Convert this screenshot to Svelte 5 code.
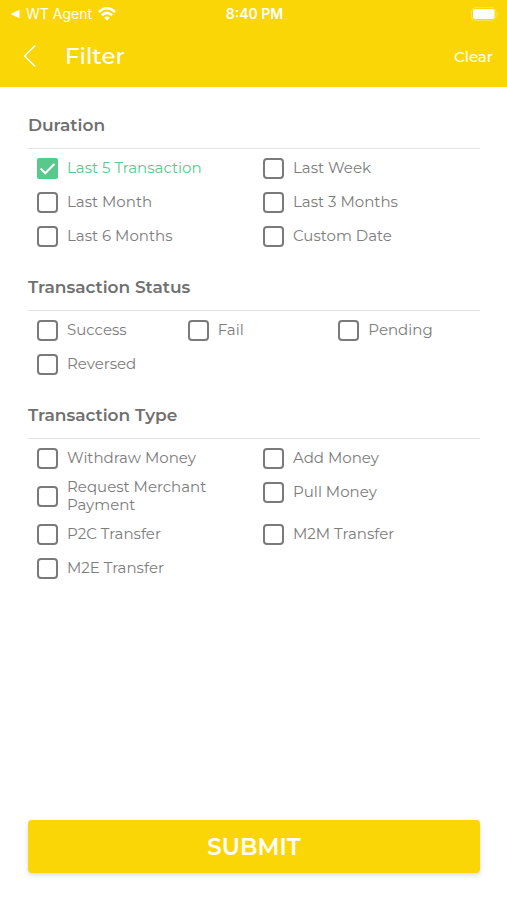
<script>
  let sections = $state([
    {
      title: 'Duration',
      columns: 2,
      options: [
        { label: 'Last 5 Transaction', checked: true },
        { label: 'Last Week', checked: false },
        { label: 'Last Month', checked: false },
        { label: 'Last 3 Months', checked: false },
        { label: 'Last 6 Months', checked: false },
        { label: 'Custom Date', checked: false }
      ]
    },
    {
      title: 'Transaction Status',
      columns: 3,
      options: [
        { label: 'Success', checked: false },
        { label: 'Fail', checked: false },
        { label: 'Pending', checked: false },
        { label: 'Reversed', checked: false }
      ]
    },
    {
      title: 'Transaction Type',
      columns: 2,
      options: [
        { label: 'Withdraw Money', checked: false },
        { label: 'Add Money', checked: false },
        { label: 'Request Merchant Payment', checked: false },
        { label: 'Pull Money', checked: false },
        { label: 'P2C Transfer', checked: false },
        { label: 'M2M Transfer', checked: false },
        { label: 'M2E Transfer', checked: false }
      ]
    }
  ]);

  function clearAll() {
    for (const section of sections) {
      for (const option of section.options) option.checked = false;
    }
  }
</script>

<div class="screen">
  <header>
    <div class="status">
      <div class="carrier">
        <svg width="10" height="10" viewBox="0 0 10 10" aria-hidden="true">
          <path d="M0.5 5 9.5 0.8V9.2Z" fill="#fff" />
        </svg>
        <span>WT Agent</span>
        <svg width="18" height="14" viewBox="0 0 18 14" aria-hidden="true">
          <g fill="none" stroke="#fff" stroke-width="2.5">
            <path d="M0.9 5.1Q9-2.7 17.1 5.1" />
            <path d="M3.9 8.3Q9 3.4 14.1 8.3" />
          </g>
          <path d="M9 13.6 6.1 10.6Q9 8.3 11.9 10.6Z" fill="#fff" />
        </svg>
      </div>
      <span class="time">8:40 PM</span>
      <svg class="battery" width="28" height="14" viewBox="0 0 28 14" aria-hidden="true">
        <rect x="0.5" y="0.5" width="24.5" height="13" rx="4" fill="none" stroke="#fff" stroke-opacity="0.3" />
        <rect x="2" y="2" width="21.5" height="10" rx="2.2" fill="#fff" />
        <path d="M26.2 4.8Q28 7 26.2 9.2Z" fill="#fff" fill-opacity="0.4" />
      </svg>
    </div>
    <div class="bar">
      <button class="back" type="button" aria-label="Back">
        <svg width="14" height="24" viewBox="0 0 14 24" aria-hidden="true">
          <path d="M12.2 1.5 1.6 12 12.2 22.5" fill="none" stroke="#fff" stroke-width="1.5" />
        </svg>
      </button>
      <h1>Filter</h1>
      <button class="clear" type="button" onclick={clearAll}>Clear</button>
    </div>
  </header>

  <form onsubmit={(event) => event.preventDefault()}>
    {#each sections as section}
      <fieldset>
        <legend>{section.title}</legend>
        <div class="options" class:three={section.columns === 3}>
          {#each section.options as option}
            <label class:checked={option.checked}>
              <span class="box">
                <input type="checkbox" bind:checked={option.checked} />
                {#if option.checked}
                  <svg width="21" height="21" viewBox="0 0 21 21" aria-hidden="true">
                    <path d="M3.6 10.6 8.2 15.2 17.4 6" fill="none" stroke="#fff" stroke-width="2.1" />
                  </svg>
                {/if}
              </span>
              <span>{option.label}</span>
            </label>
          {/each}
        </div>
      </fieldset>
    {/each}
    <button class="submit" type="submit">SUBMIT</button>
  </form>
</div>

<style>
  :global(body) {
    margin: 0;
    background: #fff;
  }

  .screen {
    display: flex;
    flex-direction: column;
    min-height: 100vh;
    font-family: Montserrat, Inter, sans-serif;
    color: #707070;
  }

  button {
    padding: 0;
    border: 0;
    background: none;
    color: #fff;
    font-family: inherit;
    cursor: pointer;
  }

  header {
    padding-bottom: 2px;
    background: #fad607;
    color: #fff;
  }

  .status {
    display: grid;
    grid-template-columns: 1fr auto 1fr;
    align-items: center;
    height: 27px;
    padding: 0 8px 0 10px;
    font-family: Inter, sans-serif;
    font-size: 14px;
  }

  .carrier {
    display: flex;
    align-items: center;
    gap: 6px;
  }

  .time {
    font-weight: 600;
  }

  .battery {
    justify-self: end;
  }

  .bar {
    display: flex;
    align-items: center;
    height: 58px;
    padding: 0 14px 0 23px;
  }

  .back {
    display: flex;
    width: 42px;
  }

  h1 {
    flex: 1;
    margin: 0;
    font-size: 23px;
    font-weight: 500;
  }

  .clear {
    font-size: 15px;
    font-weight: 500;
  }

  form {
    display: flex;
    flex: 1;
    flex-direction: column;
    gap: 21px;
    padding: 25px 27px 27px 28px;
  }

  fieldset {
    min-width: 0;
    margin: 0;
    padding: 0;
    border: 0;
  }

  legend {
    box-sizing: border-box;
    width: 100%;
    padding: 0 0 10px;
    border-bottom: 1px solid #e4e4e4;
    font-size: 17px;
    font-weight: 600;
    line-height: 26px;
  }

  .options {
    display: grid;
    grid-template-columns: repeat(2, 1fr);
    align-items: start;
    padding-top: 2px;
  }

  .options.three {
    grid-template-columns: repeat(3, 1fr);
  }

  label {
    display: flex;
    align-items: center;
    gap: 9px;
    box-sizing: border-box;
    min-height: 34px;
    padding: 3px 0 3px 9px;
    font-size: 15px;
    line-height: 18px;
    color: #7c7c7c;
  }

  label.checked {
    color: #58c88b;
  }

  .box {
    display: grid;
    flex: none;
  }

  .box > * {
    grid-area: 1 / 1;
  }

  .box svg {
    pointer-events: none;
  }

  input {
    appearance: none;
    box-sizing: border-box;
    width: 21px;
    height: 21px;
    margin: 0;
    border: 2px solid #7a7a7a;
    border-radius: 4px;
  }

  input:checked {
    border-color: #58c88b;
    border-radius: 2px;
    background: #58c88b;
  }

  .submit {
    height: 53px;
    margin-top: auto;
    border-radius: 4px;
    background: #fad607;
    box-shadow: 0 2px 5px rgb(40 50 90 / 18%);
    font-size: 23px;
    font-weight: 600;
  }
</style>
